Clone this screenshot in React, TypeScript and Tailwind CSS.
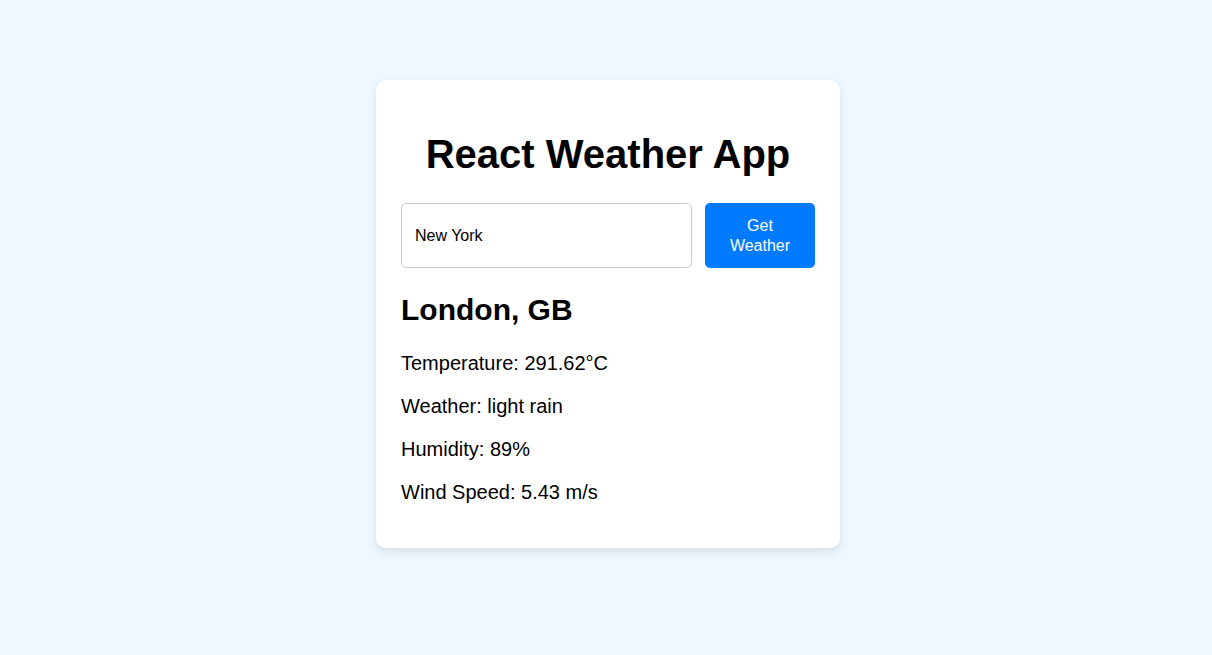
export default function App() {
  return (
    <div
      className="min-h-[655px] bg-[#f0f8ff] flex justify-center pl-1 pt-[80px]"
      style={{ fontFamily: '"Liberation Sans", Arial, sans-serif' }}
    >
      <div className="w-[464px] h-[468px] bg-white rounded-[10px] shadow-[0_4px_10px_rgba(0,0,0,0.1)] px-[25px] pt-[51px]">
        <h1 className="text-[40px] font-bold text-black text-center leading-[46px]">React Weather App</h1>
        <div className="flex gap-[13px] mt-[26px]">
          <input
            className="w-[291px] h-[65px] border border-[#ccc] rounded-[5px] px-[13px] text-[16px] text-black outline-none"
            defaultValue="New York"
          />
          <button className="w-[110px] h-[65px] bg-[#007bff] text-white rounded-[5px] text-[16px] leading-[20px] px-[20px]">
            Get Weather
          </button>
        </div>
        <h2 className="text-[30px] font-bold text-black mt-[25px] leading-[34px]">London, GB</h2>
        <div className="mt-[25px] text-[20px] leading-[23px] text-black flex flex-col gap-[20px]">
          <p>Temperature: 291.62°C</p>
          <p>Weather: light rain</p>
          <p>Humidity: 89%</p>
          <p>Wind Speed: 5.43 m/s</p>
        </div>
      </div>
    </div>
  );
}
